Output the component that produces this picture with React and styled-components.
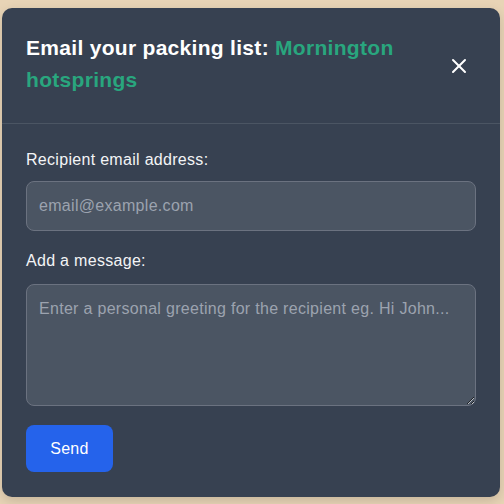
import React from "react";
import styled, { createGlobalStyle } from "styled-components";
import { X } from "lucide-react";

const Global = createGlobalStyle`
  html, body { margin: 0; padding: 0; background: #e8d4b6; }
  body { font-family: "Liberation Sans", Arial, sans-serif; }
  * { box-sizing: border-box; }
`;

const Page = styled.div`
  width: 504px;
  height: 504px;
  padding: 8px 4px 7px 2px;
`;

const Panel = styled.div`
  width: 498px;
  height: 489px;
  background: #374151;
  border-radius: 10px;
  box-shadow: 0 4px 12px rgba(0, 0, 0, 0.15);
  display: flex;
  flex-direction: column;
`;

const Header = styled.div`
  display: flex;
  align-items: center;
  justify-content: space-between;
  gap: 16px;
  padding: 24px 29px 27px 24px;
  border-bottom: 1px solid #4b5563;
`;

const Title = styled.h2`
  margin: 0;
  font-size: 21px;
  line-height: 32px;
  letter-spacing: 0.3px;
  font-weight: 700;
  color: #ffffff;
  max-width: 380px;
`;

const Accent = styled.span`
  color: #29a67e;
`;

const CloseButton = styled.button`
  background: none;
  border: none;
  padding: 0;
  margin-top: 4px;
  color: #ffffff;
  display: flex;
  cursor: pointer;
`;

const Body = styled.form`
  padding: 24px;
  display: flex;
  flex-direction: column;
`;

const Label = styled.label`
  display: block;
  font-size: 16px;
  line-height: 24px;
  letter-spacing: 0.3px;
  color: #f3f4f6;
  margin-bottom: ${(p) => p.$gap}px;
`;

const fieldCss = `
  display: block;
  width: 100%;
  background: #4b5563;
  border: 1px solid #6b7280;
  border-radius: 8px;
  color: #f9fafb;
  font-family: "Liberation Sans", Arial, sans-serif;
  font-size: 16px;
  line-height: 24px;
  letter-spacing: 0.3px;
  padding: 12px;
  outline: none;
  &::placeholder { color: #9ca3af; opacity: 1; }
`;

const Input = styled.input`
  ${fieldCss}
  height: 50px;
  margin-bottom: 18px;
`;

const TextArea = styled.textarea`
  ${fieldCss}
  height: 122px;
  margin-bottom: 19px;
  resize: vertical;
`;

const SendButton = styled.button`
  align-self: flex-start;
  width: 87px;
  height: 47px;
  background: #2563eb;
  color: #ffffff;
  border: none;
  border-radius: 8px;
  font-family: "Liberation Sans", Arial, sans-serif;
  font-size: 16px;
  letter-spacing: 0.3px;
  cursor: pointer;
`;

export default function App() {
  return (
    <>
      <Global />
      <Page>
        <Panel>
          <Header>
            <Title>
              Email your packing list: <Accent>Mornington hotsprings</Accent>
            </Title>
            <CloseButton type="button" aria-label="Close">
              <X size={24} strokeWidth={2} />
            </CloseButton>
          </Header>
          <Body onSubmit={(e) => e.preventDefault()}>
            <Label htmlFor="email" $gap={9}>Recipient email address:</Label>
            <Input id="email" type="email" placeholder="email@example.com" />
            <Label htmlFor="msg" $gap={11}>Add a message:</Label>
            <TextArea
              id="msg"
              rows={4}
              placeholder="Enter a personal greeting for the recipient eg. Hi John..."
            />
            <SendButton type="submit">Send</SendButton>
          </Body>
        </Panel>
      </Page>
    </>
  );
}
